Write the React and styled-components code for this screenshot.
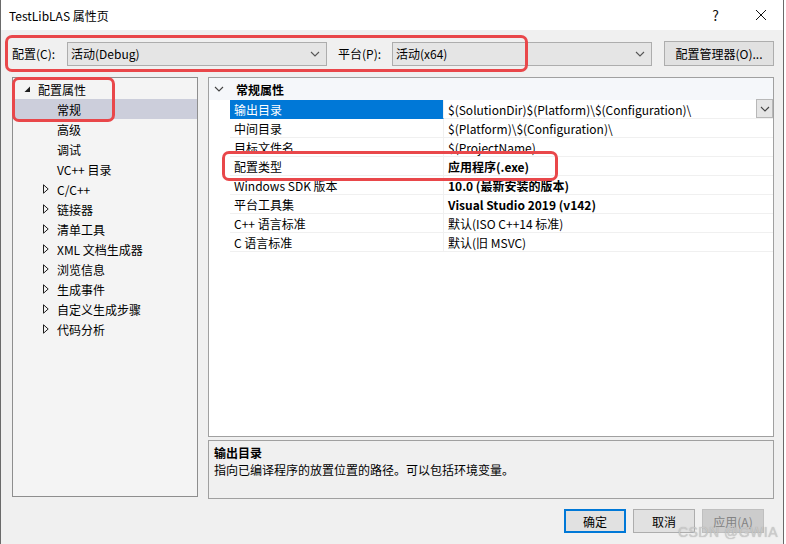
import React from "react"
import styled, { createGlobalStyle } from "styled-components"

const Global = createGlobalStyle`
  html, body { margin: 0; padding: 0; background: #fff; }
  body { font-family: "Noto Sans CJK SC", "Noto Sans", sans-serif; font-size: 12px; color: #000; }
`

const Win = styled.div`
  position: relative;
  width: 782px;
  height: 544px;
  background: #f0f0f0;
  border-left: 1px solid #6a6a6a;
  border-right: 1px solid #6a6a6a;
  display: flex;
  flex-direction: column;
  overflow: hidden;
`

const TitleBar = styled.div`
  height: 30px;
  background: #fff;
  display: flex;
  align-items: center;
  padding-left: 8px;
  font-size: 12px;
`
const Title = styled.div`
  flex: 1;
`
const TitleBtn = styled.div`
  width: 45px;
  height: 30px;
  display: grid;
  place-items: center;
  font-size: ${p => p.$size || 14}px;
  color: #111;
`

const Toolbar = styled.div`
  display: flex;
  align-items: center;
  height: 25px;
  margin-top: 11px;
  padding-left: 11px;
`
const Label = styled.span`
  width: ${p => p.$w}px;
  flex: none;
  white-space: nowrap;
`
const Combo = styled.div`
  width: ${p => p.$w}px;
  height: 24px;
  box-sizing: border-box;
  background: #e5e5e5;
  border: 1px solid #adadad;
  display: flex;
  align-items: center;
  padding-left: 3px;
  padding-right: 6px;
  margin-right: ${p => p.$mr}px;
  span { flex: 1; }
`
const Button = styled.div`
  width: ${p => p.$w}px;
  height: ${p => p.$h || 24}px;
  box-sizing: border-box;
  background: ${p => (p.$disabled ? "#cccccc" : "#e1e1e1")};
  color: ${p => (p.$disabled ? "#838383" : "#000")};
  border: ${p => (p.$primary ? "2px solid #0078d7" : p.$disabled ? "1px solid #bfbfbf" : "1px solid #adadad")};
  display: grid;
  place-items: center;
  white-space: nowrap;
`

const Main = styled.div`
  display: flex;
  gap: 10px;
  margin-top: 11px;
  padding-left: 11px;
  height: 422px;
`
const Tree = styled.div`
  width: 186px;
  height: 420px;
  box-sizing: border-box;
  background: #f4f4f4;
  border: 1px solid #8e8e8e;
  padding-top: 1px;
`
const TreeRow = styled.div`
  height: 20px;
  display: flex;
  align-items: center;
  padding-left: ${p => p.$indent}px;
  background: ${p => (p.$selected ? "#cccedb" : "transparent")};
  white-space: nowrap;
`
const Arrow = styled.span`
  width: 14px;
  display: inline-flex;
`

const RightCol = styled.div`
  width: 566px;
  display: flex;
  flex-direction: column;
  gap: 3px;
`
const Grid = styled.div`
  height: 360px;
  box-sizing: border-box;
  background: #fff;
  border: 1px solid #a0a0a0;
`
const Header = styled.div`
  height: 22px;
  display: flex;
  align-items: center;
  background: #f5f7fa;
  font-weight: bold;
  padding-left: 5px;
  span { margin-left: 12px; }
`
const PRow = styled.div`
  display: grid;
  grid-template-columns: 21px 214px 1fr;
  height: 19px;
`
const Gutter = styled.div``
const NameCell = styled.div`
  display: flex;
  align-items: center;
  padding-left: 4px;
  background: ${p => (p.$selected ? "#0078d7" : "#fff")};
  color: ${p => (p.$selected ? "#fff" : "#000")};
  border-bottom: 1px solid ${p => (p.$selected ? "#0078d7" : "#f0f0f0")};
  border-right: 1px solid #f0f0f0;
  white-space: nowrap;
`
const ValueCell = styled.div`
  display: flex;
  align-items: center;
  padding-left: 4px;
  font-weight: ${p => (p.$bold ? "bold" : "normal")};
  border-bottom: 1px solid #f0f0f0;
  white-space: nowrap;
  span { flex: 1; }
`
const DropBtn = styled.div`
  width: 17px;
  height: 19px;
  box-sizing: border-box;
  background: #e5e5e5;
  border: 1px solid #b8b8b8;
  display: grid;
  place-items: center;
  margin-top: -1px;
`

const Desc = styled.div`
  height: 59px;
  box-sizing: border-box;
  border: 1px solid #a0a0a0;
  background: #f0f0f0;
  padding: 3px 5px;
  line-height: 17px;
`
const DescTitle = styled.div`
  font-weight: bold;
`

const Footer = styled.div`
  display: flex;
  justify-content: flex-end;
  gap: 7px;
  margin-top: 10px;
  padding-right: 19px;
`

const Mark = styled.div`
  position: absolute;
  left: ${p => p.$x}px;
  top: ${p => p.$y}px;
  width: ${p => p.$w}px;
  height: ${p => p.$h}px;
  box-sizing: border-box;
  border: 3px solid #e9474a;
  border-radius: 7px;
  pointer-events: none;
`
const Watermark = styled.div`
  position: absolute;
  right: 5px;
  bottom: 4px;
  font-size: 14px;
  color: rgba(205, 205, 205, 0.9);
  text-shadow: 0 0 1px rgba(120, 120, 120, 0.5);
  font-family: "Liberation Sans", sans-serif;
  letter-spacing: 0.5px;
`

const Chevron = ({ color = "#555" }) => (
  <svg width="10" height="6" viewBox="0 0 10 6">
    <path d="M1 1 L5 5 L9 1" fill="none" stroke={color} strokeWidth="1.1" />
  </svg>
)
const Expanded = () => (
  <svg width="7" height="7" viewBox="0 0 7 7">
    <path d="M6 0.5 L6 6 L0.5 6 Z" fill="#1e1e1e" />
  </svg>
)
const Collapsed = () => (
  <svg width="6" height="10" viewBox="0 0 6 10">
    <path d="M0.5 0.8 L5.2 5 L0.5 9.2 Z" fill="none" stroke="#1e1e1e" strokeWidth="1" />
  </svg>
)

const treeItems = [
  { t: "常规", child: true, sel: true },
  { t: "高级", child: true },
  { t: "调试", child: true },
  { t: "VC++ 目录", child: true },
  { t: "C/C++" },
  { t: "链接器" },
  { t: "清单工具" },
  { t: "XML 文档生成器" },
  { t: "浏览信息" },
  { t: "生成事件" },
  { t: "自定义生成步骤" },
  { t: "代码分析" },
]

const props = [
  { n: "输出目录", v: "$(SolutionDir)$(Platform)\\$(Configuration)\\", sel: true },
  { n: "中间目录", v: "$(Platform)\\$(Configuration)\\" },
  { n: "目标文件名", v: "$(ProjectName)" },
  { n: "配置类型", v: "应用程序(.exe)", b: true },
  { n: "Windows SDK 版本", v: "10.0 (最新安装的版本)", b: true },
  { n: "平台工具集", v: "Visual Studio 2019 (v142)", b: true },
  { n: "C++ 语言标准", v: "默认(ISO C++14 标准)" },
  { n: "C 语言标准", v: "默认(旧 MSVC)" },
]

export default function App() {
  return (
    <Win>
      <Global />
      <TitleBar>
        <Title>TestLibLAS 属性页</Title>
        <TitleBtn $size={14}>?</TitleBtn>
        <TitleBtn>
          <svg width="12" height="12" viewBox="0 0 12 12">
            <path d="M1 1 L11 11 M11 1 L1 11" stroke="#111" strokeWidth="1" />
          </svg>
        </TitleBtn>
      </TitleBar>

      <Toolbar>
        <Label $w={55}>配置(C):</Label>
        <Combo $w={260} $mr={11}>
          <span>活动(Debug)</span>
          <Chevron />
        </Combo>
        <Label $w={54}>平台(P):</Label>
        <Combo $w={260} $mr={12}>
          <span>活动(x64)</span>
          <Chevron />
        </Combo>
        <Button $w={110} $h={25}>配置管理器(O)...</Button>
      </Toolbar>

      <Main>
        <Tree>
          <TreeRow $indent={11}>
            <Arrow><Expanded /></Arrow>
            配置属性
          </TreeRow>
          {treeItems.map(it => (
            <TreeRow key={it.t} $indent={it.child ? 44 : 30} $selected={it.sel}>
              {!it.child && <Arrow><Collapsed /></Arrow>}
              {it.t}
            </TreeRow>
          ))}
        </Tree>

        <RightCol>
          <Grid>
            <Header>
              <Chevron color="#444" />
              <span>常规属性</span>
            </Header>
            {props.map(p => (
              <PRow key={p.n}>
                <Gutter />
                <NameCell $selected={p.sel}>{p.n}</NameCell>
                <ValueCell $bold={p.b}>
                  <span>{p.v}</span>
                  {p.sel && <DropBtn><Chevron color="#444" /></DropBtn>}
                </ValueCell>
              </PRow>
            ))}
          </Grid>
          <Desc>
            <DescTitle>输出目录</DescTitle>
            <div>指向已编译程序的放置位置的路径。可以包括环境变量。</div>
          </Desc>
        </RightCol>
      </Main>

      <Footer>
        <Button $w={62} $primary>确定</Button>
        <Button $w={62}>取消</Button>
        <Button $w={62} $disabled>应用(A)</Button>
      </Footer>

      <Mark $x={4} $y={35} $w={523} $h={37} />
      <Mark $x={11} $y={77} $w={103} $h={45} />
      <Mark $x={221} $y={151} $w={336} $h={30} />
      <Watermark>CSDN @GWIA</Watermark>
    </Win>
  )
}
